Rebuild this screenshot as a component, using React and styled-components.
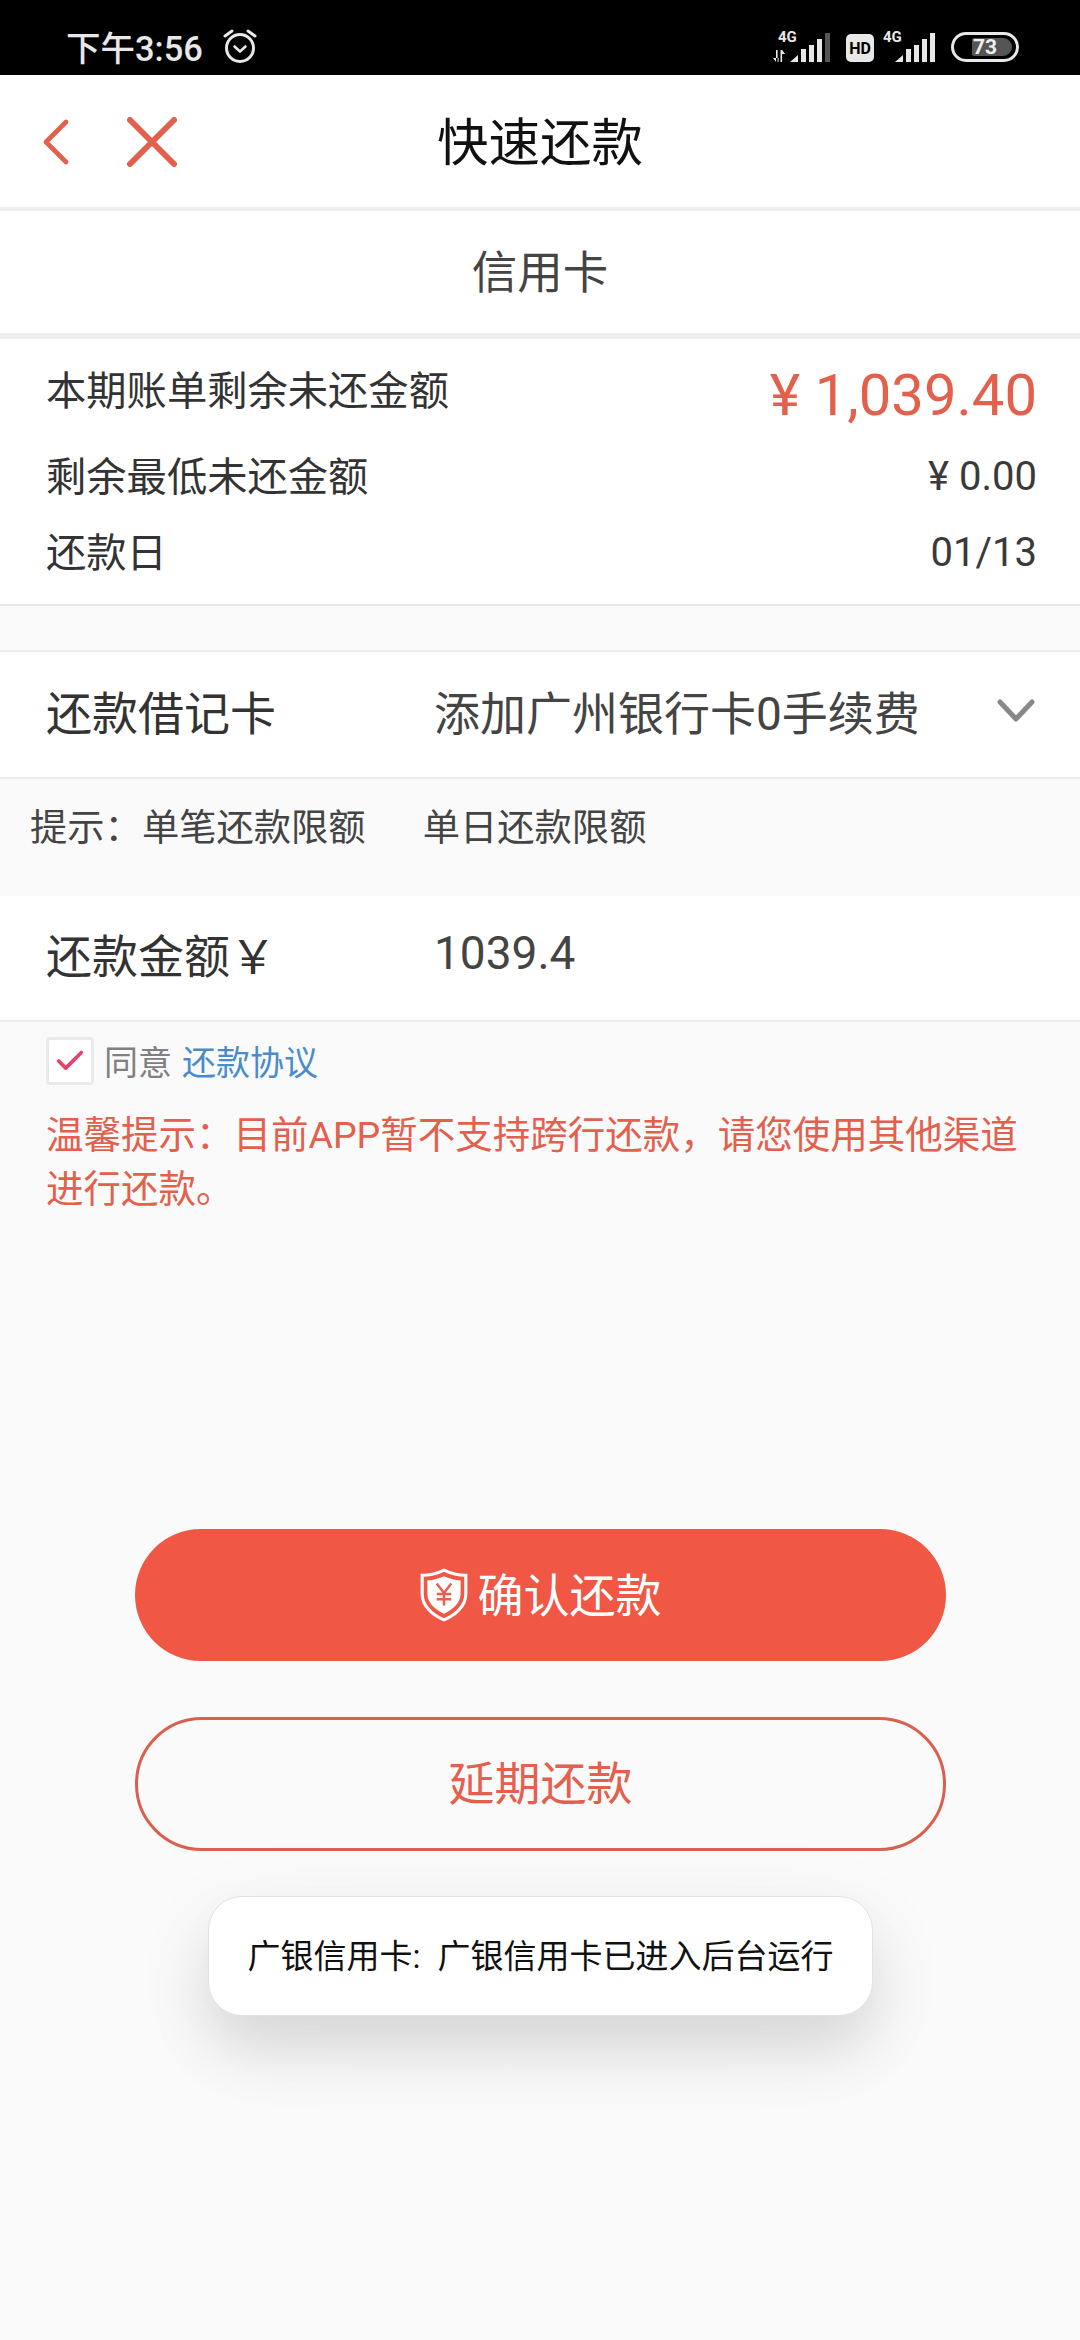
import React from "react"
import styled, { createGlobalStyle } from "styled-components"
import { Check } from "lucide-react"

const RED = "#e2604c"

const Global = createGlobalStyle`
    html, body {
        margin: 0;
        padding: 0;
        background: #fafafa;
    }
    * {
        box-sizing: border-box;
    }
`

const Page = styled.div`
    position: relative;
    width: 1080px;
    height: 2340px;
    overflow: hidden;
    background: #fafafa;
    font-family: Roboto, "Noto Sans CJK SC", sans-serif;
    color: #333;
`

const StatusBar = styled.div`
    height: 75px;
    background: #000;
    display: flex;
    align-items: center;
    justify-content: space-between;
    padding: 17px 61px 0 66px;
    color: #e8e8e8;
`

const StatusLeft = styled.div`
    display: flex;
    align-items: center;
    gap: 20px;
    font-size: 34.5px;
    font-weight: 500;
`

const StatusRight = styled.div`
    display: flex;
    align-items: center;
`

const NavBar = styled.div`
    position: relative;
    height: 136px;
    background: #fff;
    border-bottom: 4px solid #eeeeee;
    display: flex;
    align-items: center;
    justify-content: center;
`

const NavIcons = styled.div`
    position: absolute;
    left: 43px;
    top: 42px;
    display: flex;
    align-items: center;
    gap: 58px;
`

const Title = styled.div`
    font-size: 51.5px;
    color: #111;
    line-height: 1;
    margin-top: 6px;
`

const TabRow = styled.div`
    height: 128px;
    background: #fff;
    border-bottom: 6px solid #eeeeee;
    padding-bottom: 7px;
    display: flex;
    align-items: center;
    justify-content: center;
    font-size: 45.5px;
    color: #444;
`

const Summary = styled.div`
    height: 267px;
    background: #fff;
    border-bottom: 2px solid #e9e9e9;
    padding: 0 43px 0 46px;
    display: flex;
    flex-direction: column;
`

const SummaryRow = styled.div`
    height: ${(props) => props.height}px;
    display: flex;
    justify-content: space-between;
    align-items: ${(props) => (props.top ? "flex-start" : "center")};
    font-size: 40.3px;
    color: #333;
`

const Amount = styled.span`
    font-size: ${(props) => (props.big ? 58 : 40)}px;
    color: ${(props) => (props.big ? RED : "#3a3a3a")};
    line-height: 1;
    margin-top: ${(props) => (props.big ? 27 : 10)}px;
`

const TopLabel = styled.span`
    line-height: 1;
    margin-top: 33px;
`

const RowLabel = styled.span`
    margin-top: 2px;
`

const FormRow = styled.div`
    height: ${(props) => props.height}px;
    margin-top: ${(props) => props.gap || 0}px;
    background: #fff;
    border-top: ${(props) => (props.topLine ? "2px solid #ececec" : "none")};
    border-bottom: 2px solid #ececec;
    padding-left: 46px;
    padding-right: 44px;
    display: flex;
    align-items: center;
    font-size: 46px;
    color: #333;
`

const FormLabel = styled.div`
    width: 388px;
    flex: none;
    margin-top: -10px;
`

const FormValue = styled.div`
    flex: 1;
    color: #444;
    margin-top: -10px;
`

const HintRow = styled.div`
    height: 117px;
    padding: 0 0 26px 30px;
    display: flex;
    align-items: center;
    gap: 57px;
    font-size: 37.3px;
    color: #444;
`

const Agreement = styled.div`
    display: flex;
    align-items: center;
    padding: 14px 0 0 46px;
    font-size: 34px;
    color: #808080;
`

const CheckBox = styled.div`
    width: 48px;
    height: 48px;
    background: #fff;
    border: 3px solid #eaeaea;
    border-radius: 4px;
    margin-right: 10px;
    display: flex;
    align-items: center;
    justify-content: center;
    color: #e8436a;
`

const Link = styled.span`
    color: #4a8cca;
    margin-left: 10px;
`

const Warning = styled.div`
    padding: 0 46px;
    margin-top: 23px;
    font-size: 37.5px;
    line-height: 54px;
    color: ${RED};
`

const Actions = styled.div`
    margin-top: 313px;
    padding: 0 134px 0 135px;
    display: flex;
    flex-direction: column;
    gap: 56px;
`

const PrimaryButton = styled.div`
    height: 132px;
    border-radius: 66px;
    background: #f05744;
    color: #fff;
    font-size: 46px;
    display: flex;
    align-items: center;
    justify-content: center;
    gap: 10px;
    padding-bottom: 6px;
`

const OutlineButton = styled.div`
    height: 134px;
    border-radius: 67px;
    border: 3px solid #d9604f;
    color: ${RED};
    font-size: 46px;
    padding-bottom: 8px;
    display: flex;
    align-items: center;
    justify-content: center;
`

const Toast = styled.div`
    position: absolute;
    left: 208px;
    top: 1896px;
    width: 665px;
    height: 120px;
    background: #fff;
    border: 1px solid #e2e2e2;
    border-radius: 34px;
    box-shadow: 0 34px 60px rgba(0, 0, 0, 0.12), 0 20px 120px rgba(0, 0, 0, 0.04);
    padding-bottom: 5px;
    display: flex;
    align-items: center;
    justify-content: center;
    font-size: 33px;
    word-spacing: 9px;
    color: #111;
    white-space: nowrap;
`

const Battery = styled.div`
    position: relative;
    width: 68px;
    height: 30px;
    margin-top: 2px;
    border: 3px solid #e8e8e8;
    border-radius: 15px;
    padding: 3px;
    display: flex;
    align-items: center;
    justify-content: center;
`

const BatteryFill = styled.div`
    position: absolute;
    left: 18px;
    top: 3px;
    bottom: 3px;
    right: 4px;
    background: #555;
    border-radius: 2px 9px 9px 2px;
`

const BatteryLabel = styled.span`
    position: relative;
    font-size: 21px;
    font-weight: 700;
    color: #eee;
    line-height: 1;
`

const ShieldWrap = styled.span`
    display: flex;
    margin-top: 6px;
`

const BackIcon = () => (
    <svg width="26" height="46" viewBox="0 0 26 46" fill="none" stroke={RED} strokeWidth="4.6" strokeLinecap="round" strokeLinejoin="round">
        <path d="M23 3L3 23l20 20" />
    </svg>
)

const CloseIcon = () => (
    <svg width="50" height="50" viewBox="0 0 50 50" fill="none" stroke={RED} strokeWidth="6" strokeLinecap="round">
        <path d="M3 3l44 44M47 3L3 47" />
    </svg>
)

const DownIcon = () => (
    <svg width="40" height="24" viewBox="0 0 40 24" fill="none" stroke="#888" strokeWidth="5" strokeLinecap="round" strokeLinejoin="round" style={{ marginTop: -7 }}>
        <path d="M4 3l16 17L36 3" />
    </svg>
)

const AlarmIcon = () => (
    <svg width="34" height="36" viewBox="0 0 34 36" fill="none" stroke="#e8e8e8" strokeLinecap="round">
        <circle cx="17" cy="20" r="13.5" strokeWidth="3" />
        <path d="M11.5 18.5l5.5 5 5.5-5" strokeWidth="2.6" strokeLinejoin="round" />
        <path d="M2 8l7-5M32 8l-7-5" strokeWidth="3" />
    </svg>
)

// bars: active bars are light, a dimmed last bar on sim 1
const SignalIcon = ({ dim, arrows }) => (
    <svg width="58" height="44" viewBox="0 0 58 44" style={{ marginRight: 16 }}>
        <text x="6" y="18" fontSize="15" fontWeight="700" fontFamily="Roboto, sans-serif" fill="#e8e8e8">
            4G
        </text>
        {arrows && <path d="M1 34l3 4v-12h1.6v12h1V34zM8.5 26h1.6v12h-1.6zM10.1 26l3 4h-3z" fill="#e8e8e8" />}
        <g fill="#e8e8e8" transform="translate(18,0)">
            <path d="M0 38l8-7v7z" />
            <rect x="11" y="25" width="5" height="13" />
            <rect x="19" y="21" width="5" height="17" />
            <rect x="27" y="15" width="5" height="23" />
            <rect x="35" y="9" width="5" height="29" fill={dim ? "#555" : "#e8e8e8"} />
        </g>
    </svg>
)

const HdIcon = () => (
    <svg width="28" height="28" viewBox="0 0 28 28" style={{ marginRight: 3, marginTop: 4 }}>
        <rect width="28" height="28" rx="5" fill="#e8e8e8" />
        <text x="14" y="20" textAnchor="middle" fontSize="16" fontWeight="700" fontFamily="Roboto, sans-serif" fill="#000">
            HD
        </text>
    </svg>
)

const ShieldIcon = () => (
    <svg width="48" height="54" viewBox="0 0 46 52">
        <path d="M23 2c6 3 13 5 21 5v18c0 11-9 20-21 25C11 45 2 36 2 25V7c8 0 15-2 21-5z" fill="none" stroke="#fff" strokeWidth="3" />
        <path d="M23 8c5 2 10 4 16 4v13c0 8-7 15-16 19C14 40 7 33 7 25V12c6 0 11-2 16-4z" fill="#fff" />
        <path d="M16 15l7 9 7-9M23 24v12M16 25h14M16 30h14" fill="none" stroke="#e8604c" strokeWidth="2.4" />
    </svg>
)

function App() {
    return (
        <Page>
            <Global />
            <StatusBar>
                <StatusLeft>
                    <span>下午3:56</span>
                    <AlarmIcon />
                </StatusLeft>
                <StatusRight>
                    <SignalIcon dim arrows />
                    <HdIcon />
                    <SignalIcon />
                    <Battery>
                        <BatteryFill />
                        <BatteryLabel>73</BatteryLabel>
                    </Battery>
                </StatusRight>
            </StatusBar>
            <NavBar>
                <NavIcons>
                    <BackIcon />
                    <CloseIcon />
                </NavIcons>
                <Title>快速还款</Title>
            </NavBar>
            <TabRow>信用卡</TabRow>
            <Summary>
                <SummaryRow height={92} top>
                    <TopLabel>本期账单剩余未还金额</TopLabel>
                    <Amount big>¥ 1,039.40</Amount>
                </SummaryRow>
                <SummaryRow height={82}>
                    <RowLabel>剩余最低未还金额</RowLabel>
                    <Amount>¥ 0.00</Amount>
                </SummaryRow>
                <SummaryRow height={70}>
                    <RowLabel>还款日</RowLabel>
                    <Amount>01/13</Amount>
                </SummaryRow>
            </Summary>
            <FormRow height={129} gap={44} topLine>
                <FormLabel>还款借记卡</FormLabel>
                <FormValue>添加广州银行卡0手续费</FormValue>
                <DownIcon />
            </FormRow>
            <HintRow>
                <span>提示：单笔还款限额</span>
                <span>单日还款限额</span>
            </HintRow>
            <FormRow height={126}>
                <FormLabel>还款金额￥</FormLabel>
                <FormValue>1039.4</FormValue>
            </FormRow>
            <Agreement>
                <CheckBox>
                    <Check size={34} strokeWidth={2.6} />
                </CheckBox>
                同意<Link>还款协议</Link>
            </Agreement>
            <Warning>温馨提示：目前APP暂不支持跨行还款，请您使用其他渠道进行还款。</Warning>
            <Actions>
                <PrimaryButton>
                    <ShieldWrap>
                        <ShieldIcon />
                    </ShieldWrap>
                    确认还款
                </PrimaryButton>
                <OutlineButton>延期还款</OutlineButton>
            </Actions>
            <Toast>广银信用卡: 广银信用卡已进入后台运行</Toast>
        </Page>
    )
}

export default App
